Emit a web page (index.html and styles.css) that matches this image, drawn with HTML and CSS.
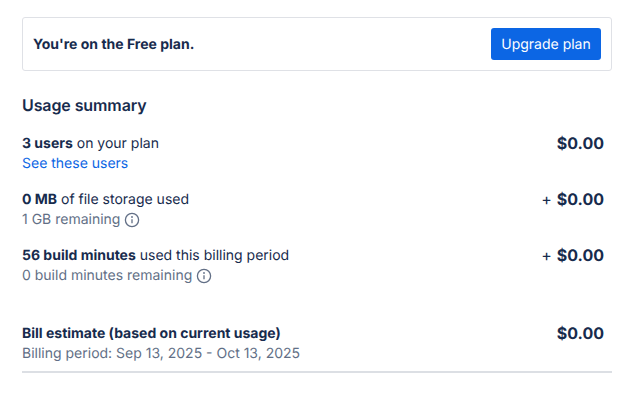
FILE: index.html
```html
<!DOCTYPE html>
<html lang="en">
<head>
<meta charset="utf-8">
<title>Usage summary</title>
<link rel="stylesheet" href="styles.css">
</head>
<body>
<main class="page">
  <section class="plan-card">
    <span class="plan-text">You're on the Free plan.</span>
    <button class="upgrade" type="button">Upgrade plan</button>
  </section>
  <h2 class="title">Usage summary</h2>
  <div class="row row-users">
    <div class="info">
      <div class="line"><strong>3 users</strong> on your plan</div>
      <a class="link" href="#">See these users</a>
    </div>
    <div class="price">$0.00</div>
  </div>
  <div class="row row-storage">
    <div class="info">
      <div class="line"><strong>0 MB</strong> of file storage used</div>
      <div class="sub">1 GB remaining
        <svg class="icon" viewBox="0 0 16 16" aria-hidden="true"><circle cx="8" cy="8" r="6.6"/><path d="M8 7.2v4"/><circle class="dot" cx="8" cy="5" r="0.9"/></svg>
      </div>
    </div>
    <div class="price"><span class="plus">+</span>$0.00</div>
  </div>
  <div class="row row-build">
    <div class="info">
      <div class="line"><strong>56 build minutes</strong> used this billing period</div>
      <div class="sub">0 build minutes remaining
        <svg class="icon" viewBox="0 0 16 16" aria-hidden="true"><circle cx="8" cy="8" r="6.6"/><path d="M8 7.2v4"/><circle class="dot" cx="8" cy="5" r="0.9"/></svg>
      </div>
    </div>
    <div class="price"><span class="plus">+</span>$0.00</div>
  </div>
  <div class="row row-total">
    <div class="info">
      <div class="line"><strong>Bill estimate (based on current usage)</strong></div>
      <div class="sub">Billing period: Sep 13, 2025 - Oct 13, 2025</div>
    </div>
    <div class="price">$0.00</div>
  </div>
</main>
</body>
</html>
```
FILE: styles.css
```css
* { box-sizing: border-box; }
html, body { margin: 0; background: #fff; }
body { font-family: Inter, "Liberation Sans", sans-serif; color: #172b4d; font-size: 14px; line-height: 20px; text-rendering: geometricPrecision; }
.page { width: 590px; margin-left: 22px; padding-top: 17px; }
.plan-card { height: 54px; border: 1px solid #dfe1e6; border-radius: 3px; display: flex; align-items: center; justify-content: space-between; padding: 0 10px; }
.plan-text { font-weight: 653; margin-top: 2px; }
.upgrade { height: 32px; width: 110px; border: 0; border-radius: 3px; background: #0c66e4; color: #fff; font: 400 14px Inter, "Liberation Sans", sans-serif; padding: 0; text-rendering: geometricPrecision; }
.title { margin: 23px 0 0; font-size: 16px; line-height: 22px; font-weight: 600; letter-spacing: -0.1px; }
.row { display: flex; justify-content: space-between; align-items: flex-start; padding-right: 8px; }
.row-users { margin-top: 18px; }
.row-storage, .row-build { margin-top: 16px; }
.row-total { margin-top: 38px; padding-bottom: 7px; border-bottom: 2px solid #dcdfe4; }
.line strong { font-weight: 653; }
.link { color: #0c66e4; text-decoration: none; display: block; }
.sub { color: #626f86; display: flex; align-items: center; gap: 4px; }
.icon { width: 16px; height: 16px; fill: none; stroke: #626f86; stroke-width: 1.3; }
.icon .dot { fill: #626f86; stroke: none; }
.price { font-size: 16px; font-weight: 653; line-height: 20px; margin-top: -1px; }
.plus { font-weight: 400; margin-right: 5px; }
```
